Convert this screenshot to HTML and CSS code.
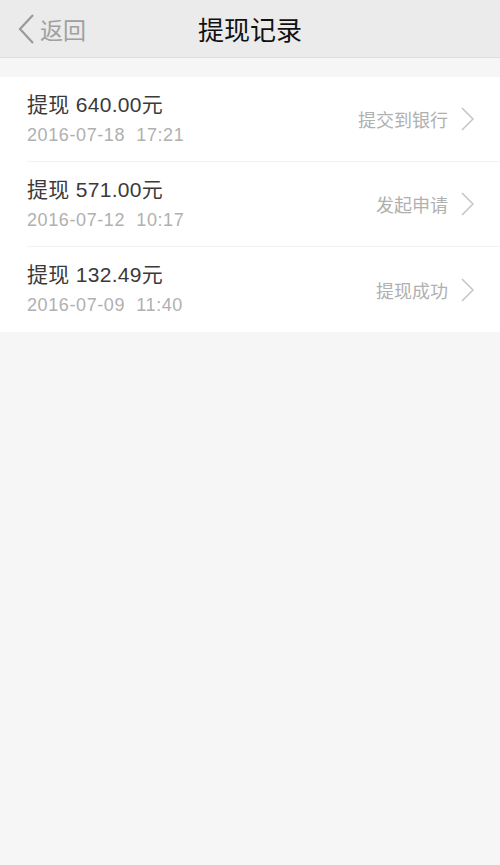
FILE: index.html
```html
<!DOCTYPE html>
<html lang="zh-CN">

<head>
    <meta charset="UTF-8">
    <meta name="viewport" content="width=device-width, initial-scale=1.0">
    <title>提现记录</title>
    <link rel="stylesheet" href="styles.css">
</head>

<body>
    <div class="navbar">
        <div class="back">
            <svg class="back-icon" width="17" height="32" viewBox="0 0 17 32">
                <polyline points="15,2 2,16 15,30" fill="none" stroke="#9a9a9a" stroke-width="2.2" />
            </svg>
            <span>返回</span>
        </div>
        <div class="title">提现记录</div>
    </div>

    <ul class="records">
        <li class="record">
            <div class="info">
                <div class="amount">提现 640.00元</div>
                <div class="date">2016-07-18&nbsp;&nbsp;17:21</div>
            </div>
            <div class="status">提交到银行</div>
            <svg class="arrow" width="13" height="24" viewBox="0 0 13 24">
                <polyline points="1,1 12,12 1,23" fill="none" stroke="#c4c4c4" stroke-width="1.5" />
            </svg>
        </li>
        <li class="record">
            <div class="info">
                <div class="amount">提现 571.00元</div>
                <div class="date">2016-07-12&nbsp;&nbsp;10:17</div>
            </div>
            <div class="status">发起申请</div>
            <svg class="arrow" width="13" height="24" viewBox="0 0 13 24">
                <polyline points="1,1 12,12 1,23" fill="none" stroke="#c4c4c4" stroke-width="1.5" />
            </svg>
        </li>
        <li class="record">
            <div class="info">
                <div class="amount">提现 132.49元</div>
                <div class="date">2016-07-09&nbsp;&nbsp;11:40</div>
            </div>
            <div class="status">提现成功</div>
            <svg class="arrow" width="13" height="24" viewBox="0 0 13 24">
                <polyline points="1,1 12,12 1,23" fill="none" stroke="#c4c4c4" stroke-width="1.5" />
            </svg>
        </li>
    </ul>
</body>

</html>
```

FILE: styles.css
```css
body {
    margin: 0;
    font-family: "Noto Sans CJK SC", "Liberation Sans", sans-serif;
    background-color: #f6f6f6;
    color: #333;
}

.navbar {
    position: relative;
    height: 57px;
    background-color: #ebebeb;
    border-bottom: 1px solid #dedede;
    display: flex;
    align-items: center;
    justify-content: center;
}

.back {
    position: absolute;
    left: 18px;
    top: 12px;
    display: flex;
    align-items: center;
    color: #a0a0a0;
    font-size: 23px;
}

.back-icon {
    margin-right: 5px;
}

.title {
    font-size: 26px;
    color: #111;
}

.records {
    list-style: none;
    margin: 19px 0 0;
    padding: 0;
    background-color: #fff;
}

.record {
    height: 85px;
    margin-left: 27px;
    padding-right: 26px;
    display: flex;
    align-items: center;
    border-bottom: 1px solid #f3f3f3;
    box-sizing: border-box;
}

.record:last-child {
    border-bottom: none;
}

.info {
    flex: 1;
}

.amount {
    font-family: "Liberation Sans", "Noto Sans CJK SC", sans-serif;
    font-size: 21px;
    letter-spacing: 0.3px;
    color: #3a3a3a;
    line-height: 26px;
}

.date {
    font-family: "Liberation Sans", sans-serif;
    font-size: 18px;
    letter-spacing: 0.6px;
    color: #b0b0b0;
    line-height: 24px;
    margin-top: 5px;
}

.status {
    font-size: 18px;
    color: #b0b0b0;
    margin-right: 13px;
}
```
